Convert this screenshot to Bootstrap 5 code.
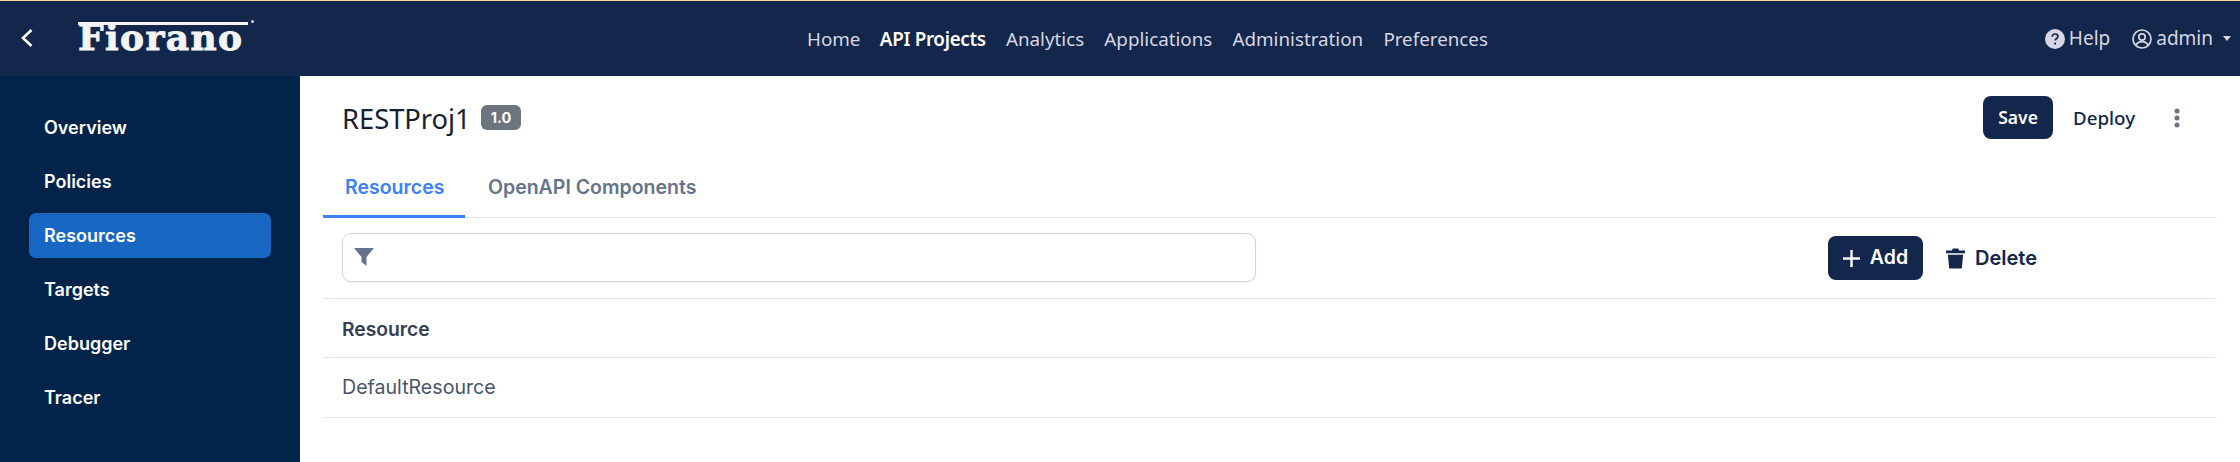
<!DOCTYPE html>
<html lang="en">
<head>
<meta charset="utf-8">
<title>RESTProj1</title>
<link href="https://cdn.jsdelivr.net/npm/bootstrap@5.3.0/dist/css/bootstrap.min.css" rel="stylesheet">
<style>
html,body{height:100%;}
body{background:#fff;font-family:Inter,sans-serif;overflow:hidden;}
.app-shell{height:462px;}
.top-bar{height:76px;background:#12274b;border-top:1px solid #fdd9a0;font-family:"Noto Sans",sans-serif;}
.back-link{width:78px;padding-left:20px;color:#fff;margin-top:-4px;}
.logo-mark{width:170px;height:30px;margin-top:-4px;color:#f4f4f4;font-family:"DejaVu Serif",serif;font-weight:700;font-size:36px;line-height:25px;border-top:3px solid #f4f4f4;letter-spacing:1.4px;-webkit-text-stroke:.9px #f4f4f4;white-space:nowrap;}
.logo-dot{width:3px;height:3px;border-radius:50%;background:#d8d6e4;margin:-34px 0 0 3px;}
.main-links{left:807px;top:20px;}
.main-links a{color:#d8d6e4;font-size:18.8px;text-decoration:none;padding:0;line-height:36px;margin-right:20.2px;}
.main-links a:first-child{margin-right:19.4px;}
.main-links a.on{color:#fff;font-weight:600;letter-spacing:-.3px;}
.user-links{color:#d8d6e4;font-size:19px;padding-right:10px;gap:22px;margin-top:0;}
.user-links span+span{margin-right:-1px;}
.caret-tri{width:0;height:0;border-left:4.500px solid transparent;border-right:4.500px solid transparent;border-top:5px solid #d8d6e4;margin-left:10px;}
.side-panel{width:300px;background:#03244a;padding:29px 29px 0;}
.side-panel a{display:block;height:45px;line-height:46px;margin-bottom:9px;padding-left:15px;color:#fff;font-size:18px;font-weight:600;text-decoration:none;border-radius:7px;}
.side-panel a.on{background:#1867c3;}
.work-area{padding:0 23px;min-width:0;}
.title-row{height:83px;padding:0 19px;}
.proj-title{font-family:"Noto Sans",sans-serif;font-size:27.300px;color:#172033;line-height:1;margin:2px 0 0;font-weight:400;}
.ver-tag{background:#6c757d;color:#fff;font-size:14.500px;font-weight:700;border-radius:6px;padding:4px 10px;margin-left:10px;line-height:17px;}
.btn-dark-navy{background:#12274b;color:#fff;font-weight:600;border-radius:8px;border:0;font-size:17px;}
.save-btn{width:70px;height:43px;font-family:"Noto Sans",sans-serif;padding:0;font-size:17.500px;}
.deploy-btn{font-family:"Noto Sans",sans-serif;font-size:18.700px;font-weight:500;color:#12274b;margin-left:20px;line-height:43px;}
.dots-icon{margin-left:39px;margin-right:18px;}
.tab-row{border-bottom:1px solid #e2e8f0;height:59px;}
.tab-row span{display:block;padding:0 23px;font-size:19.500px;font-weight:600;line-height:56px;height:59px;color:#64748b;}
.tab-row span.on{color:#3b82f6;border-bottom:3px solid #3b82f6;width:142px;padding-left:22px;}
.tab-row span+span{padding-left:23px;}
.tool-row{height:81px;padding:0 19px;border-bottom:1px solid #e2e8f0;}
.filter-box{width:914px;height:49px;margin-top:-2px;border:1px solid #cbd5e1;border-radius:9px;padding-left:11px;box-shadow:0 1px 2px rgba(15,23,42,.06);}
.add-btn{width:95px;height:44px;font-size:19.500px;padding:0;gap:10px;}
.del-link{font-size:20px;font-weight:600;color:#12274b;margin-left:23px;margin-right:161px;gap:10px;}
.head-cell{height:59px;padding:2px 19px 0;border-bottom:1px solid #e2e8f0;font-size:19.300px;font-weight:600;color:#334155;}
.body-cell{height:60px;padding:0 19px;border-bottom:1px solid #e2e8f0;font-size:19.600px;color:#475569;}
</style>
</head>
<body>
<div class="app-shell d-flex flex-column">
  <header class="top-bar d-flex align-items-center position-relative flex-shrink-0">
    <a class="back-link d-block" href="#" aria-label="Back">
      <svg width="14" height="22" viewBox="0 0 14 22" fill="none" stroke="#fff" stroke-width="2.6"><path d="M11.5 3 3 11l8.5 8"/></svg>
    </a>
    <div class="logo-mark">Fiorano</div>
    <i class="logo-dot d-block"></i>
    <nav class="main-links position-absolute d-flex">
      <a href="#">Home</a><a class="on" href="#">API Projects</a><a href="#">Analytics</a><a href="#">Applications</a><a href="#">Administration</a><a href="#">Preferences</a>
    </nav>
    <div class="user-links ms-auto d-flex align-items-center">
      <span class="d-flex align-items-center gap-1">
        <svg width="20" height="20" viewBox="0 0 20 20"><circle cx="10" cy="10" r="10" fill="#d8d6e4"/><path d="M7.2 7.8c0-1.7 1.2-2.8 2.9-2.8 1.6 0 2.8 1 2.8 2.4 0 2-2.5 2.1-2.7 4" fill="none" stroke="#12274b" stroke-width="1.7"/><circle cx="10.1" cy="14.6" r="1.1" fill="#12274b"/></svg>
        Help
      </span>
      <span class="d-flex align-items-center">
        <svg class="me-1" width="20" height="20" viewBox="0 0 20 20" fill="none" stroke="#d8d6e4" stroke-width="1.7"><circle cx="10" cy="10" r="9"/><circle cx="10" cy="8" r="3.2"/><path d="M4 16.2c1.2-2.6 3.4-3.6 6-3.6s4.800 1 6 3.600"/></svg>
        admin<i class="caret-tri d-inline-block"></i>
      </span>
    </div>
  </header>
  <div class="d-flex flex-grow-1">
    <aside class="side-panel flex-shrink-0">
      <a href="#">Overview</a><a href="#">Policies</a><a class="on" href="#">Resources</a><a href="#">Targets</a><a href="#">Debugger</a><a href="#">Tracer</a>
    </aside>
    <main class="work-area flex-grow-1">
      <div class="title-row d-flex align-items-center">
        <h1 class="proj-title">RESTProj1</h1>
        <span class="ver-tag">1.0</span>
        <button class="btn btn-dark-navy save-btn ms-auto" type="button">Save</button>
        <span class="deploy-btn">Deploy</span>
        <svg class="dots-icon" width="6" height="20" viewBox="0 0 6 20" fill="#6b7280"><circle cx="3" cy="3" r="2.500"/><circle cx="3" cy="10" r="2.500"/><circle cx="3" cy="17" r="2.500"/></svg>
      </div>
      <div class="tab-row d-flex">
        <span class="on">Resources</span><span>OpenAPI Components</span>
      </div>
      <div class="tool-row d-flex align-items-center">
        <div class="filter-box d-flex align-items-center">
          <svg width="20" height="18" viewBox="0 0 20 18" fill="#64748b"><path d="M0 0h20l-7.500 9v9l-5-4V9z"/></svg>
        </div>
        <button class="btn btn-dark-navy add-btn ms-auto d-flex align-items-center justify-content-center" type="button">
          <svg width="17" height="17" viewBox="0 0 17 17" stroke="#fff" stroke-width="2.400"><path d="M8.500 0v17M0 8.500h17"/></svg>Add
        </button>
        <span class="del-link d-flex align-items-center">
          <svg width="19" height="22" viewBox="0 0 18 20" fill="#12274b"><path d="M0 3h5.500l1-2h5l1 2H18v2.400H0zM1.800 7h14.400L15 20H3z"/></svg>Delete
        </span>
      </div>
      <div class="head-cell d-flex align-items-center">Resource</div>
      <div class="body-cell d-flex align-items-center">DefaultResource</div>
    </main>
  </div>
</div>
<script src="https://cdn.jsdelivr.net/npm/bootstrap@5.3.0/dist/js/bootstrap.bundle.min.js"></script>
</body>
</html>
